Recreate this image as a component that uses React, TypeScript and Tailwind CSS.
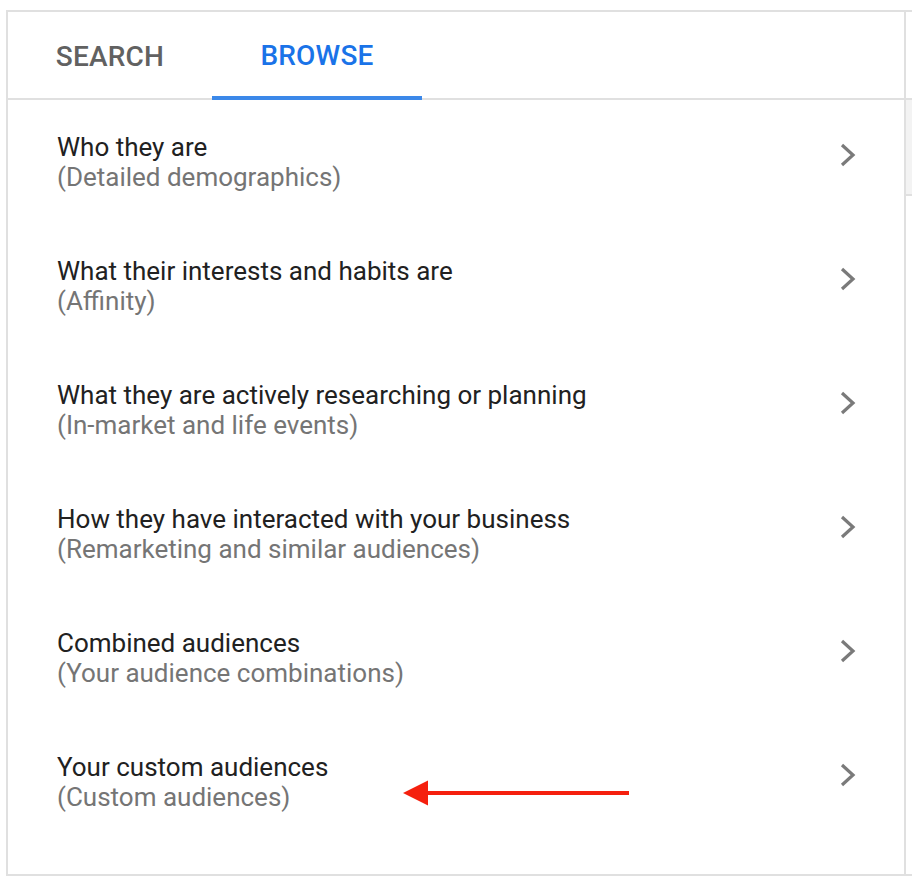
const rows = [
  { title: 'Who they are', sub: '(Detailed demographics)' },
  { title: 'What their interests and habits are', sub: '(Affinity)' },
  { title: 'What they are actively researching or planning', sub: '(In-market and life events)' },
  { title: 'How they have interacted with your business', sub: '(Remarketing and similar audiences)' },
  { title: 'Combined audiences', sub: '(Your audience combinations)' },
  { title: 'Your custom audiences', sub: '(Custom audiences)' },
]

function Chevron() {
  return (
    <svg width="16" height="24" viewBox="0 0 16 24" className="mt-[11px] shrink-0">
      <polyline points="2,2 13,12 2,22" fill="none" stroke="#7a7a7a" strokeWidth="3.2" />
    </svg>
  )
}

function RedArrow() {
  return (
    <svg width="230" height="28" viewBox="0 0 230 28" className="absolute left-[395px] top-[59px]">
      <line x1="22" y1="14" x2="226" y2="14" stroke="#f5200e" strokeWidth="4" />
      <polygon points="0,14 25,1.5 25,26.5" fill="#f5200e" />
    </svg>
  )
}

export default function App() {
  return (
    <div className="w-[912px] h-[882px] bg-white font-['Roboto',sans-serif] pt-[10px] pl-[6px]">
      <div className="flex border-t-2 border-b-2 border-l-2 border-[#e0e0e0] h-[866px]">
        <div className="w-[898px] border-r-2 border-[#e0e0e0] flex flex-col">
          <div className="h-[88px] border-b-2 border-[#e0e0e0] flex">
            <div className="w-[204px] h-[88px] -mb-[2px] flex items-center justify-center pt-[2px] text-[28px] font-medium text-[#616161] tracking-[0.2px]">
              SEARCH
            </div>
            <div className="w-[210px] h-[88px] -mb-[2px] flex items-center justify-center pt-[4px] border-b-4 border-[#3b88e9] text-[28px] font-medium text-[#1a73e8] tracking-[0.2px]">
              BROWSE
            </div>
          </div>
          <div className="flex flex-col">
            {rows.map((r, i) => (
              <div key={i} className="relative h-[124px] pt-[32px] pl-[49px] pr-[48px] flex items-start justify-between">
                <div className="text-[26px] leading-[30px]">
                  <div className="text-[#212121]">{r.title}</div>
                  <div className="text-[#757575]">{r.sub}</div>
                </div>
                <Chevron />
                {i === rows.length - 1 && <RedArrow />}
              </div>
            ))}
          </div>
        </div>
        <div className="flex-1 flex flex-col">
          <div className="h-[88px] border-b-2 border-[#e0e0e0]" />
          <div className="h-[96px] bg-[#f3f3f3] border-b-2 border-[#e0e0e0]" />
        </div>
      </div>
    </div>
  )
}
